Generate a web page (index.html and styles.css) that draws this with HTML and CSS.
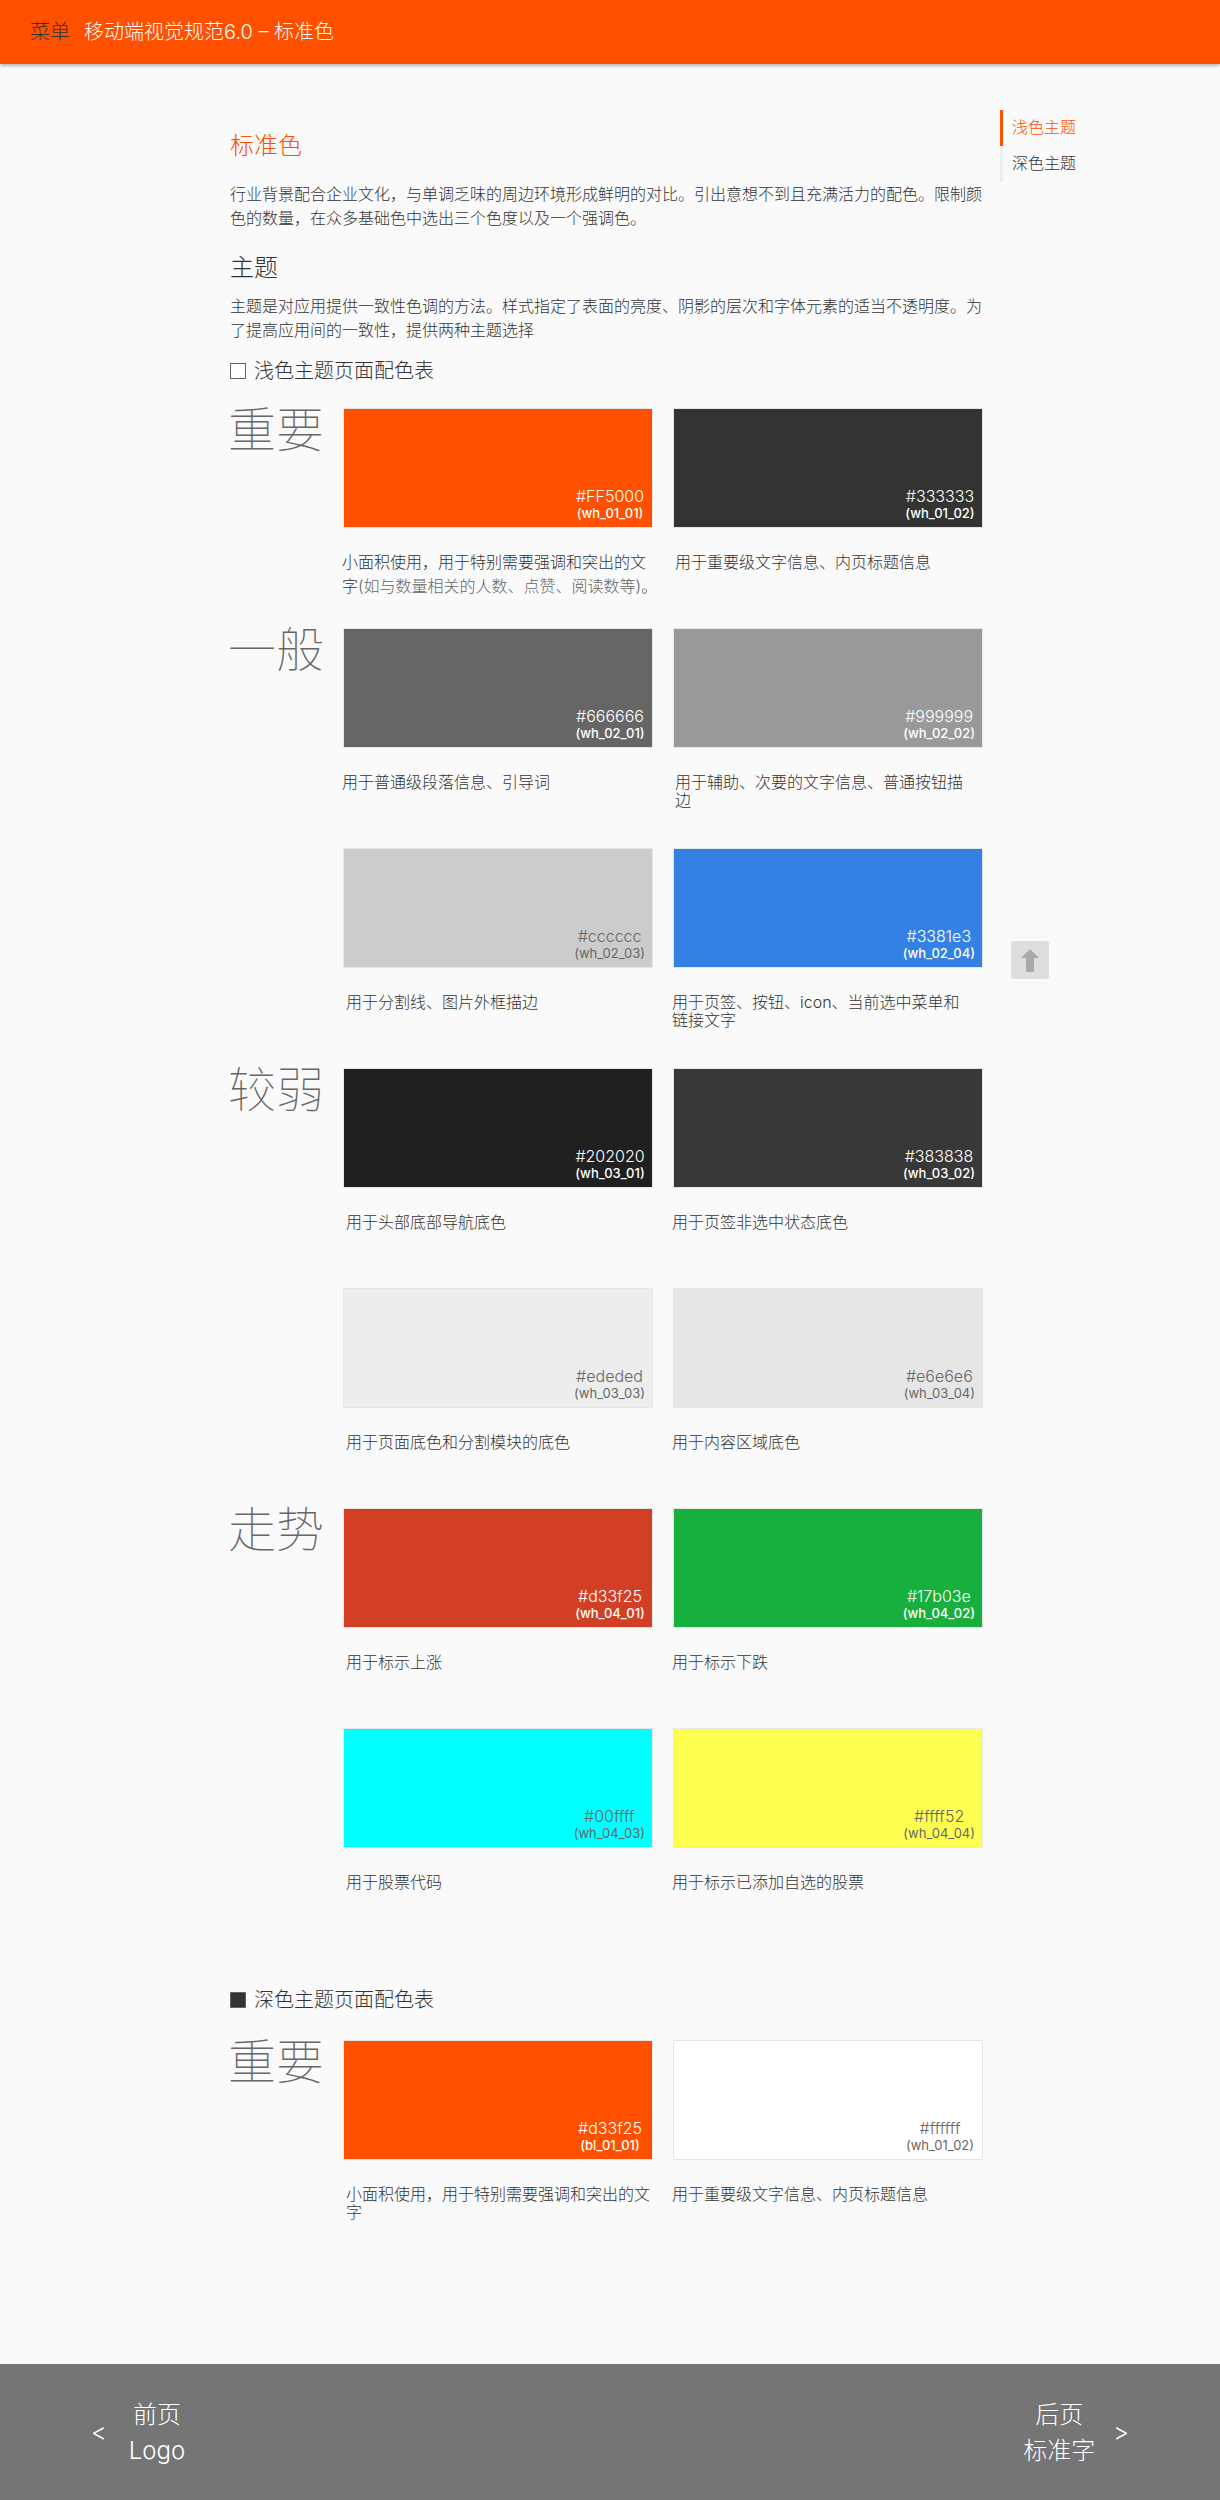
FILE: index.html
```html
<!DOCTYPE html>
<html lang="zh-CN">
<head>
<meta charset="utf-8">
<meta name="viewport" content="width=device-width, initial-scale=1">
<title>移动端视觉规范6.0 – 标准色</title>
<link rel="stylesheet" href="styles.css">
</head>
<body>
<header class="topbar">
  <button class="topbar-menu" type="button">菜单</button>
  <span class="topbar-title">移动端视觉规范6.0 – 标准色</span>
</header>

<div class="layout">
  <main class="content">
    <h1 class="page-title">标准色</h1>
    <p class="text">行业背景配合企业文化，与单调乏味的周边环境形成鲜明的对比。引出意想不到且充满活力的配色。限制颜色的数量，在众多基础色中选出三个色度以及一个强调色。</p>
    <h2 class="section-title">主题</h2>
    <p class="text">主题是对应用提供一致性色调的方法。样式指定了表面的亮度、阴影的层次和字体元素的适当不透明度。为了提高应用间的一致性，提供两种主题选择</p>

    <section class="theme" id="light">
      <h3 class="theme-title"><span class="theme-mark"></span>浅色主题页面配色表</h3>

      <div class="group">
        <h4 class="group-name">重要</h4>
        <div class="swatches">
          <figure class="swatch">
            <div class="chip chip-orange"><span class="chip-label"><span class="code">#FF5000</span><span class="name">(wh_01_01)</span></span></div>
            <figcaption class="caption caption-wide caption-loose">小面积使用，用于特别需要强调和突出的文字<span class="note">(如与数量相关的人数、点赞、阅读数等)</span>。</figcaption>
          </figure>
          <figure class="swatch">
            <div class="chip chip-ink"><span class="chip-label"><span class="code">#333333</span><span class="name">(wh_01_02)</span></span></div>
            <figcaption class="caption caption-second">用于重要级文字信息、内页标题信息</figcaption>
          </figure>
        </div>
      </div>

      <div class="group">
        <h4 class="group-name">一般</h4>
        <div class="swatches">
          <figure class="swatch">
            <div class="chip chip-gray-dark"><span class="chip-label"><span class="code">#666666</span><span class="name">(wh_02_01)</span></span></div>
            <figcaption class="caption caption-wide">用于普通级段落信息、引导词</figcaption>
          </figure>
          <figure class="swatch">
            <div class="chip chip-gray"><span class="chip-label"><span class="code">#999999</span><span class="name">(wh_02_02)</span></span></div>
            <figcaption class="caption caption-second">用于辅助、次要的文字信息、普通按钮描边</figcaption>
          </figure>
          <figure class="swatch">
            <div class="chip chip-silver chip-pale"><span class="chip-label"><span class="code">#cccccc</span><span class="name">(wh_02_03)</span></span></div>
            <figcaption class="caption caption-inset">用于分割线、图片外框描边</figcaption>
          </figure>
          <figure class="swatch">
            <div class="chip chip-blue"><span class="chip-label"><span class="code">#3381e3</span><span class="name">(wh_02_04)</span></span></div>
            <figcaption class="caption">用于页签、按钮、icon、当前选中菜单和链接文字</figcaption>
          </figure>
        </div>
      </div>

      <div class="group">
        <h4 class="group-name">较弱</h4>
        <div class="swatches">
          <figure class="swatch">
            <div class="chip chip-black"><span class="chip-label"><span class="code">#202020</span><span class="name">(wh_03_01)</span></span></div>
            <figcaption class="caption caption-inset">用于头部底部导航底色</figcaption>
          </figure>
          <figure class="swatch">
            <div class="chip chip-charcoal"><span class="chip-label"><span class="code">#383838</span><span class="name">(wh_03_02)</span></span></div>
            <figcaption class="caption">用于页签非选中状态底色</figcaption>
          </figure>
          <figure class="swatch">
            <div class="chip chip-mist chip-pale"><span class="chip-label"><span class="code">#ededed</span><span class="name">(wh_03_03)</span></span></div>
            <figcaption class="caption caption-inset">用于页面底色和分割模块的底色</figcaption>
          </figure>
          <figure class="swatch">
            <div class="chip chip-fog chip-pale"><span class="chip-label"><span class="code">#e6e6e6</span><span class="name">(wh_03_04)</span></span></div>
            <figcaption class="caption">用于内容区域底色</figcaption>
          </figure>
        </div>
      </div>

      <div class="group">
        <h4 class="group-name">走势</h4>
        <div class="swatches">
          <figure class="swatch">
            <div class="chip chip-red"><span class="chip-label"><span class="code">#d33f25</span><span class="name">(wh_04_01)</span></span></div>
            <figcaption class="caption caption-inset">用于标示上涨</figcaption>
          </figure>
          <figure class="swatch">
            <div class="chip chip-green"><span class="chip-label"><span class="code">#17b03e</span><span class="name">(wh_04_02)</span></span></div>
            <figcaption class="caption">用于标示下跌</figcaption>
          </figure>
          <figure class="swatch">
            <div class="chip chip-cyan chip-pale"><span class="chip-label"><span class="code">#00ffff</span><span class="name">(wh_04_03)</span></span></div>
            <figcaption class="caption caption-inset">用于股票代码</figcaption>
          </figure>
          <figure class="swatch">
            <div class="chip chip-yellow chip-pale"><span class="chip-label"><span class="code">#ffff52</span><span class="name">(wh_04_04)</span></span></div>
            <figcaption class="caption">用于标示已添加自选的股票</figcaption>
          </figure>
        </div>
      </div>
    </section>

    <section class="theme theme-dark" id="dark">
      <h3 class="theme-title"><span class="theme-mark"></span>深色主题页面配色表</h3>
      <div class="group">
        <h4 class="group-name">重要</h4>
        <div class="swatches">
          <figure class="swatch">
            <div class="chip chip-orange"><span class="chip-label"><span class="code">#d33f25</span><span class="name">(bl_01_01)</span></span></div>
            <figcaption class="caption caption-inset">小面积使用，用于特别需要强调和突出的文字</figcaption>
          </figure>
          <figure class="swatch">
            <div class="chip chip-white chip-pale"><span class="chip-label"><span class="code">#ffffff</span><span class="name">(wh_01_02)</span></span></div>
            <figcaption class="caption">用于重要级文字信息、内页标题信息</figcaption>
          </figure>
        </div>
      </div>
    </section>
  </main>

  <nav class="toc" aria-label="主题">
    <a class="toc-link toc-link-active" href="#light">浅色主题</a>
    <a class="toc-link" href="#dark">深色主题</a>
  </nav>
</div>

<button class="to-top" type="button" aria-label="返回顶部">
  <svg width="18" height="23" viewBox="0 0 18 23" aria-hidden="true"><path d="M9 0 18 9H13V22q0 1-1 1H6q-1 0-1-1V9H0Z" fill="#a9a9a9"/></svg>
</button>

<footer class="pager">
  <a class="pager-link" href="#prev"><span>&lt;</span><span class="pager-text">前页<br>Logo</span></a>
  <a class="pager-link pager-next" href="#next"><span class="pager-text">后页<br>标准字</span><span>&gt;</span></a>
</footer>
</body>
</html>
```
FILE: styles.css
```css
* {
  box-sizing: border-box;
}

body {
  margin: 0;
  min-height: 100vh;
  display: flex;
  flex-direction: column;
  background: #fafafa;
  color: #333;
  font: 300 16px/24px Inter, "Noto Sans CJK SC", sans-serif;
}

h1, h2, h3, h4, p, figure {
  margin: 0;
  font-weight: 300;
}

a {
  color: inherit;
  text-decoration: none;
}

button {
  border: 0;
  padding: 0;
  font: inherit;
  cursor: pointer;
}

/* top bar */
.topbar {
  display: flex;
  align-items: center;
  gap: 14px;
  height: 64px;
  padding: 0 30px;
  background: #ff5000;
  box-shadow: 0 1px 4px rgba(0, 0, 0, 0.4);
  color: #fff;
  font-size: 20px;
}

.topbar-menu {
  background: none;
  color: #333;
}

/* page columns */
.layout {
  flex: 1;
  display: grid;
  grid-template-columns: 1fr minmax(0, 760px) 1fr;
}

.content {
  grid-column: 2;
  padding: 64px 7px 104px 0;
}

.page-title {
  margin-bottom: 18px;
  color: #ff5000;
  font-size: 24px;
  line-height: 36px;
}

.section-title {
  margin: 20px 0 8px;
  font-size: 24px;
  line-height: 36px;
}

/* theme tables */
.theme {
  margin-top: 15px;
}

.theme-title {
  display: flex;
  align-items: center;
  gap: 8px;
  margin-bottom: 23px;
  font-size: 20px;
  line-height: 28px;
}

.theme-mark {
  width: 16px;
  height: 16px;
  border: 1px solid #666;
  background: #fff;
}

.theme-dark {
  margin-top: 38px;
}

.theme-dark .theme-title {
  margin-bottom: 26px;
}

.theme-dark .theme-mark {
  background: #333;
}

.group {
  display: grid;
  grid-template-columns: 113px 1fr;
}

.group-name {
  margin-left: -2px;
  color: #666;
  font-size: 48px;
  font-weight: 100;
  line-height: 44px;
}

.swatches {
  display: grid;
  grid-template-columns: 1fr 1fr;
  grid-auto-rows: minmax(220px, auto);
  column-gap: 20px;
}

.chip {
  display: flex;
  justify-content: flex-end;
  align-items: flex-end;
  height: 120px;
  padding: 6px 7px;
  border: 1px solid #e6e6e6;
  color: #fff;
}

.chip-label {
  display: flex;
  flex-direction: column;
  align-items: center;
  min-width: 70px;
}

.code {
  font-size: 16px;
  line-height: 17px;
}

.name {
  font-size: 13px;
  font-weight: 500;
  line-height: 16px;
}

.chip-pale { color: #666; }
.chip-pale .name { font-weight: 400; }
.chip-orange { background: #ff5000; }
.chip-ink { background: #333; }
.chip-gray-dark { background: #666; }
.chip-gray { background: #999; }
.chip-silver { background: #ccc; }
.chip-blue { background: #3381e3; }
.chip-black { background: #202020; }
.chip-charcoal { background: #383838; }
.chip-mist { background: #ededed; }
.chip-fog { background: #e6e6e6; }
.chip-red { background: #d33f25; }
.chip-green { background: #17b03e; }
.chip-cyan { background: #0ff; }
.chip-yellow { background: #ffff52; }
.chip-white { background: #fff; }

.caption {
  margin-left: -1px;
  padding: 25px 10px 0 0;
  line-height: 18px;
}

.caption-inset {
  padding-left: 4px;
  padding-right: 0;
}

.caption-wide {
  padding-right: 0;
}

.caption-second {
  padding-left: 3px;
}

.caption-loose {
  margin-right: -8px;
  padding-top: 22px;
  line-height: 24px;
}

.note {
  color: #666;
}

/* in-page navigation */
.toc {
  grid-column: 3;
  justify-self: start;
  display: flex;
  flex-direction: column;
  padding: 46px 0 0 10px;
}

.toc-link {
  padding: 0 0 2px 9px;
  border-left: 3px solid #eee;
  line-height: 34px;
}

.toc-link-active {
  border-color: #ff5000;
  color: #ff5000;
}

.to-top {
  position: absolute;
  top: 941px;
  left: calc(50% + 401px);
  display: flex;
  align-items: center;
  justify-content: center;
  width: 38px;
  height: 38px;
  border-radius: 3px;
  background: #ddd;
}

/* previous / next page */
.pager {
  display: flex;
  justify-content: space-between;
  padding: 33px 91px 31px;
  background: #757575;
  color: #fff;
  font-size: 24px;
  line-height: 36px;
}

.pager-link {
  display: flex;
  align-items: center;
  gap: 22px;
}

.pager-next {
  gap: 18px;
}

.pager-text {
  text-align: center;
}
```
